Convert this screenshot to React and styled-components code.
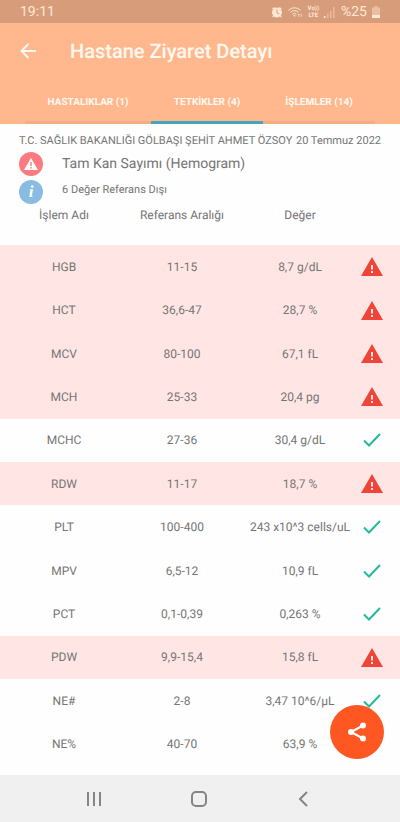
import styled, { createGlobalStyle } from "styled-components";

const results = [
  { name: "HGB", range: "11-15", value: "8,7 g/dL", alert: true },
  { name: "HCT", range: "36,6-47", value: "28,7 %", alert: true },
  { name: "MCV", range: "80-100", value: "67,1 fL", alert: true },
  { name: "MCH", range: "25-33", value: "20,4 pg", alert: true },
  { name: "MCHC", range: "27-36", value: "30,4 g/dL", alert: false },
  { name: "RDW", range: "11-17", value: "18,7 %", alert: true },
  { name: "PLT", range: "100-400", value: "243 x10^3 cells/uL", alert: false },
  { name: "MPV", range: "6,5-12", value: "10,9 fL", alert: false },
  { name: "PCT", range: "0,1-0,39", value: "0,263 %", alert: false },
  { name: "PDW", range: "9,9-15,4", value: "15,8 fL", alert: true },
  { name: "NE#", range: "2-8", value: "3,47 10^6/µL", alert: false },
  { name: "NE%", range: "40-70", value: "63,9 %", alert: false },
];

const StatusIcons = () => (
  <>
    <svg width="12" height="12" viewBox="0 0 24 24" fill="currentColor" aria-hidden="true">
      <path d="M22 5.7l-4.6-3.9-1.3 1.5 4.6 3.9L22 5.7zM7.9 3.4L6.6 1.9 2 5.7l1.3 1.5 4.6-3.8zM12 3a10 10 0 0 0-7.600 16.400L2.500 21.500l1.500 1.500 2.200-2a10 10 0 0 0 11.600 0l2.200 2 1.500-1.500-1.900-2.100A10 10 0 0 0 12 3zm-1 4h2v6l4 2.500-1 1.600-5-3.100z" />
    </svg>
    <svg width="15" height="12" viewBox="0 0 30 24" fill="none" stroke="currentColor" strokeWidth="2" aria-hidden="true">
      <path d="M1 8.500a17 17 0 0 1 24 0M5 12.500a11.500 11.500 0 0 1 16 0M9 16.500a6 6 0 0 1 8 0" />
      <path d="M10.500 18.500h5L13 22z" fill="currentColor" stroke="none" />
      <path d="M21.500 22v-6M19.500 18l2-2 2 2M26.500 15v6M24.500 19l2 2 2-2" strokeWidth="1.200" />
    </svg>
    <NetworkLabel>
      <span>Vo))</span>
      <span>LTE</span>
    </NetworkLabel>
    <svg width="12" height="12" viewBox="0 0 12 12" fill="currentColor" aria-hidden="true">
      <path d="M0 10h1.500v2H0z" />
      <path d="M3 7.500h1.500V12H3zM6 5h1.500v7H6zM9 1h1.500v11H9z" opacity="0.4" />
    </svg>
  </>
);

const BatteryIcon = () => (
  <svg width="8" height="12" viewBox="0 0 8 12" fill="currentColor" aria-hidden="true">
    <path d="M2.500 0h3v1.500H8V12H0V1.500h2.500z" opacity="0.45" />
    <path d="M0 9h8v3H0z" />
  </svg>
);

const AlertIcon = () => (
  <svg width="22" height="19" viewBox="0 0 22 19" role="img" aria-label="Referans dışı">
    <path d="M11 0l11 19H0z" fill="#f04438" />
    <path d="M10 8h2v4.500h-2zM10 14h2v2h-2z" fill="#ffe6e4" />
  </svg>
);

const CheckIcon = () => (
  <svg width="18" height="14" viewBox="0 0 18 14" role="img" aria-label="Normal">
    <path d="M1 7.500l5 5L17 1" fill="none" stroke="#26b99a" strokeWidth="2" />
  </svg>
);

const App = () => {
  return (
    <Page>
      <GlobalStyle />
      <StatusBar>
        <span>19:11</span>
        <StatusGroup>
          <StatusIcons />
          <span>%25</span>
          <BatteryIcon />
        </StatusGroup>
      </StatusBar>

      <Header>
        <TitleBar>
          <BackButton aria-label="Geri">
            <svg width="16" height="16" viewBox="0 0 16 16" fill="none" stroke="currentColor" strokeWidth="2">
              <path d="M16 8H2M8.500 1L1.500 8l7 7" />
            </svg>
          </BackButton>
          <Title>Hastane Ziyaret Detayı</Title>
        </TitleBar>
        <Tabs>
          <Tab>HASTALIKLAR (1)</Tab>
          <Tab $active>TETKİKLER (4)</Tab>
          <Tab>İŞLEMLER (14)</Tab>
        </Tabs>
      </Header>

      <Content>
        <VisitRow>
          <span>T.C. SAĞLIK BAKANLIĞI GÖLBAŞI ŞEHİT AHMET ÖZSOY</span>
          <time>20 Temmuz 2022</time>
        </VisitRow>
        <SummaryRow>
          <Badge $color="#fb7b80">
            <svg width="14" height="12" viewBox="0 0 14 12" aria-hidden="true">
              <path d="M7 0l7 12H0z" fill="#fff" />
              <path d="M6.300 4h1.400v4H6.300zM6.300 9h1.400v1.500H6.300z" fill="#fb7b80" />
            </svg>
          </Badge>
          <TestName>Tam Kan Sayımı (Hemogram)</TestName>
        </SummaryRow>
        <SummaryRow>
          <Badge $color="#88bce2">i</Badge>
          <Note>6 Değer Referans Dışı</Note>
        </SummaryRow>

        <Table>
          <colgroup>
            <Col $width="32%" />
            <Col $width="27%" />
            <Col $width="30%" />
            <Col $width="11%" />
          </colgroup>
          <thead>
            <tr>
              <HeadCell>İşlem Adı</HeadCell>
              <HeadCell>Referans Aralığı</HeadCell>
              <ValueHead>Değer</ValueHead>
              <HeadCell aria-label="Durum" />
            </tr>
          </thead>
          <tbody>
            {results.map((item) => (
              <Row key={item.name} $alert={item.alert}>
                <Cell>{item.name}</Cell>
                <Cell>{item.range}</Cell>
                <ValueCell>{item.value}</ValueCell>
                <IconCell>{item.alert ? <AlertIcon /> : <CheckIcon />}</IconCell>
              </Row>
            ))}
          </tbody>
        </Table>
        <ShareButton aria-label="Paylaş">
          <svg width="20" height="20" viewBox="0 0 20 20" fill="currentColor">
            <path d="M16 3.500L4 10l12 6.500" fill="none" stroke="currentColor" strokeWidth="2" />
            <circle cx="16" cy="3.500" r="3" />
            <circle cx="4" cy="10" r="3" />
            <circle cx="16" cy="16.500" r="3" />
          </svg>
        </ShareButton>
      </Content>

      <NavBar>
        <NavButton aria-label="Son uygulamalar">
          <svg width="16" height="16" viewBox="0 0 16 16" fill="none" stroke="currentColor" strokeWidth="2">
            <path d="M2 1v14M8 1v14M14 1v14" />
          </svg>
        </NavButton>
        <NavButton aria-label="Ana ekran">
          <svg width="16" height="16" viewBox="0 0 16 16" fill="none" stroke="currentColor" strokeWidth="2">
            <rect x="1" y="1" width="14" height="14" rx="4" />
          </svg>
        </NavButton>
        <NavButton aria-label="Geri dön">
          <svg width="16" height="16" viewBox="0 0 16 16" fill="none" stroke="currentColor" strokeWidth="2">
            <path d="M11 1L4 8l7 7" />
          </svg>
        </NavButton>
      </NavBar>
    </Page>
  );
};

const GlobalStyle = createGlobalStyle`
  * {
    box-sizing: border-box;
  }

  body {
    margin: 0;
    background: #fefefe;
    color: #757575;
    font-family: Roboto, sans-serif;
    font-size: 12px;
    text-rendering: geometricPrecision;
  }

  button {
    border: none;
    padding: 0;
    background: none;
    color: inherit;
    font-family: inherit;
    text-rendering: inherit;
    cursor: pointer;
  }

  svg {
    display: block;
  }
`;

const Page = styled.div`
  display: flex;
  flex-direction: column;
  min-height: 100vh;
`;

const StatusBar = styled.div`
  display: flex;
  align-items: center;
  justify-content: space-between;
  height: 23px;
  padding: 0 20px;
  background: #d79d7a;
  color: #ffe6d5;
  font-size: 14px;
`;

const StatusGroup = styled.div`
  display: flex;
  align-items: center;
  gap: 5px;
`;

const NetworkLabel = styled.span`
  display: flex;
  flex-direction: column;
  align-items: center;
  font-size: 6px;
  line-height: 7px;
  font-weight: 700;
`;

const Header = styled.header`
  background: #ffb88d;
  color: #fff8f0;
`;

const TitleBar = styled.div`
  display: flex;
  align-items: center;
  gap: 34px;
  height: 56px;
  padding: 0 20px;
`;

const BackButton = styled.button`
  flex: none;
`;

const Title = styled.h1`
  margin: 0;
  font-size: 20px;
  font-weight: 500;
`;

const Tabs = styled.nav`
  display: grid;
  grid-template-columns: 9fr 8fr 8fr;
  padding: 0 25px;
`;

const Tab = styled.button`
  height: 45px;
  padding-top: 4px;
  border-bottom: 3px solid ${({ $active }) => ($active ? "#44a5bd" : "#f0ad86")};
  font-size: 10px;
  font-weight: 700;
  white-space: nowrap;
`;

const Content = styled.main`
  display: flex;
  flex: 1;
  flex-direction: column;
  position: relative;
  padding: 8px 0 9px;
`;

const VisitRow = styled.div`
  display: flex;
  justify-content: space-between;
  padding: 0 19px;
  font-size: 11px;
  line-height: 18px;
`;

const SummaryRow = styled.div`
  display: flex;
  align-items: center;
  gap: 19px;
  height: 28px;
  padding: 0 19px;
`;

const Badge = styled.span`
  display: flex;
  align-items: center;
  justify-content: center;
  width: 24px;
  height: 24px;
  border-radius: 50%;
  background: ${({ $color }) => $color};
  color: #fff;
  font-family: "Liberation Serif", serif;
  font-size: 17px;
  font-style: italic;
  font-weight: 700;
`;

const TestName = styled.h2`
  margin: 0;
  font-size: 14px;
  font-weight: 400;
`;

const Note = styled.p`
  align-self: flex-start;
  margin: 0;
  font-size: 11px;
  line-height: 24px;
`;

const Table = styled.table`
  flex: 1;
  width: 100%;
  border-collapse: collapse;
  table-layout: fixed;
  text-align: center;
`;

const Col = styled.col`
  width: ${({ $width }) => $width};
`;

const HeadCell = styled.th`
  height: 39px;
  padding: 0;
  font-weight: 400;
  line-height: 18px;
  vertical-align: top;
`;

const ValueHead = styled(HeadCell)`
  padding-left: 8px;
`;

const Row = styled.tr`
  background: ${({ $alert }) => ($alert ? "#ffe6e4" : "transparent")};
`;

const Cell = styled.td`
  height: 43px;
  padding: 0;
  white-space: nowrap;
`;

const ValueCell = styled(Cell)`
  padding-left: 8px;
`;

const IconCell = styled(Cell)`
  padding-right: 12px;

  svg {
    margin: 0 auto;
  }
`;

const ShareButton = styled.button`
  position: absolute;
  right: 16px;
  bottom: 16px;
  display: flex;
  align-items: center;
  justify-content: center;
  width: 54px;
  height: 54px;
  border-radius: 50%;
  background: #ff5722;
  color: #fff;
`;

const NavBar = styled.nav`
  display: grid;
  grid-template-columns: repeat(3, 1fr);
  height: 47px;
  padding: 0 44px 0 42px;
  background: #f0f0f0;
  color: #858585;
`;

const NavButton = styled.button`
  display: flex;
  align-items: center;
  justify-content: center;
`;

export default App;
